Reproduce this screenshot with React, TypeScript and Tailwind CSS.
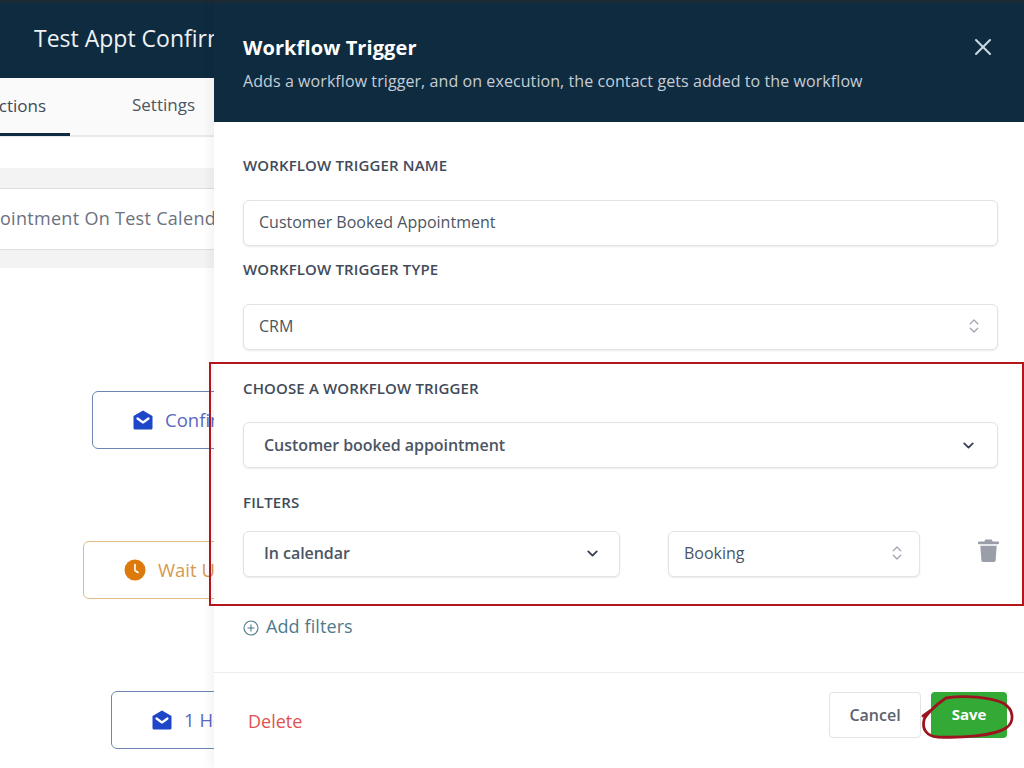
import React from "react";
import { ChevronDown, ChevronsUpDown, X } from "lucide-react";

const font = "font-['Open_Sans',sans-serif]";

function MailIcon({ className }: { className?: string }) {
  return (
    <svg viewBox="0 0 20 20" className={className} fill="currentColor">
      <path d="M10 0.5 L19.5 6 V18 a1.5 1.5 0 0 1 -1.5 1.5 H2 a1.5 1.5 0 0 1 -1.5 -1.5 V6 Z" />
      <path d="M4.5 8.5 L10 12.5 L15.5 8.5" fill="none" stroke="#fff" strokeWidth="2.2" strokeLinecap="round" strokeLinejoin="round" />
    </svg>
  );
}

function Node({ color, text, icon, left, top, label }: { color: string; text: string; icon: React.ReactNode; left: string; top: string; label: string }) {
  return (
    <div className={`${left} ${top} ${color} flex h-[58px] w-[260px] shrink-0 items-center gap-[12px] rounded-[6px] border-[1.5px] pl-[40px] text-[18.5px] ${text}`}>
      {icon}
      <span className="whitespace-nowrap">{label}</span>
    </div>
  );
}

function Label({ children, className = "" }: { children: React.ReactNode; className?: string }) {
  return <div className={`text-[15px] leading-[20px] font-semibold tracking-[0.14px] text-[#414b5a] ${className}`}>{children}</div>;
}

function Box({ children, className = "" }: { children: React.ReactNode; className?: string }) {
  return (
    <div className={`flex h-[46px] items-center justify-between rounded-[6px] border border-[#e1e3e7] bg-white shadow-[0_1px_2px_rgba(0,0,0,0.08)] ${className}`}>
      {children}
    </div>
  );
}

export default function App() {
  return (
    <div className={`${font} relative flex h-[768px] w-[1024px] overflow-hidden bg-white`}>
      {/* background page */}
      <div className="flex w-[214px] shrink-0 flex-col overflow-hidden">
        <div className="flex h-[78px] shrink-0 items-center border-t-[3px] border-[#1c2b33] bg-[#0f2b40] pb-[4px] pl-[34px]">
          <span className="text-[23px] whitespace-nowrap text-[#eef2f5]">Test Appt Confirm</span>
        </div>
        <div className="flex h-[59px] shrink-0 border-b-2 border-[#e9eaec] bg-[#fafafa]">
          <div className="ml-[-60px] flex h-[58px] w-[130px] shrink-0 items-center justify-end border-b-[3px] border-[#0f2b40] pr-[24px] text-[17px] font-medium text-[#3f4a58]">
            Actions
          </div>
          <div className="ml-[62px] flex h-[54px] items-center text-[17px] font-medium text-[#4b5563]">Settings</div>
        </div>
        <div className="mt-[31px] h-[20px] shrink-0 bg-[#f3f3f3]" />
        <div className="flex h-[62px] shrink-0 items-center justify-end overflow-hidden border-y border-[#dedede] bg-white pb-[2px] whitespace-nowrap">
          <span className="mr-[-20px] text-[18px] tracking-[0.3px] text-[#6b7280]">Appointment On Test Calendar</span>
        </div>
        <div className="h-[18px] shrink-0 bg-[#f3f3f3]" />
        <Node left="ml-[92px]" top="mt-[123px]" color="border-[#6f86b5]" text="text-[#5a68c0]" label="Confirmation" icon={<MailIcon className="h-[20px] w-[20px] shrink-0 text-[#1d46c8]" />} />
        <Node left="ml-[83px]" top="mt-[92px]" color="border-[#e3bd85]" text="text-[#d59a4e]" label="Wait Until" icon={
          <svg viewBox="0 0 22 22" className="h-[22px] w-[22px] shrink-0">
            <circle cx="11" cy="11" r="10.5" fill="#dd7a0c" />
            <path d="M11 5.5 V11.5 L14 13.5" fill="none" stroke="#fff" strokeWidth="1.6" strokeLinecap="round" />
          </svg>
        } />
        <Node left="ml-[111px]" top="mt-[92px]" color="border-[#6f86b5]" text="text-[#5a68c0]" label="1 Hour" icon={<MailIcon className="h-[20px] w-[20px] shrink-0 text-[#1d46c8]" />} />
      </div>

      {/* drawer */}
      <div className="flex w-[810px] shrink-0 flex-col bg-white shadow-[-4px_0_10px_rgba(0,0,0,0.05)]">
        <div className="flex h-[122px] shrink-0 items-start justify-between border-t-[3px] border-[#1c2b33] bg-[#0f2b40] pr-[27px] pl-[29px]">
          <div>
            <div className="mt-[31px] text-[20px] leading-[28px] font-bold tracking-[0.1px] text-white">Workflow Trigger</div>
            <div className="mt-[8px] text-[16px] leading-[22px] tracking-[0.08px] text-[#c5ced6]">Adds a workflow trigger, and on execution, the contact gets added to the workflow</div>
          </div>
          <X className="mt-[30px] h-[28px] w-[28px] text-[#c8d6e0]" strokeWidth={1.8} />
        </div>

        <div className="flex h-[551px] shrink-0 flex-col border-b border-[#ececec] pl-[29px]">
          <Label className="mt-[33px]">WORKFLOW TRIGGER NAME</Label>
          <Box className="mt-[25px] w-[755px] pb-[2px] pl-[15px]">
            <span className="text-[16px] text-[#4b5563]">Customer Booked Appointment</span>
          </Box>
          <Label className="mt-[13px]">WORKFLOW TRIGGER TYPE</Label>
          <Box className="mt-[25px] w-[755px] pr-[14px] pb-[2px] pl-[15px]">
            <span className="text-[16px] text-[#4b5563]">CRM</span>
            <ChevronsUpDown className="h-[18px] w-[18px] text-[#9ca3af]" strokeWidth={1.6} />
          </Box>
          <Label className="mt-[28px]">CHOOSE A WORKFLOW TRIGGER</Label>
          <Box className="mt-[24px] w-[755px] pr-[20px] pl-[20px]">
            <span className="text-[16px] font-semibold tracking-[-0.06px] text-[#4b5563]">Customer booked appointment</span>
            <ChevronDown className="h-[17px] w-[17px] text-[#374151]" strokeWidth={2.6} />
          </Box>
          <Label className="mt-[24px]">FILTERS</Label>
          <div className="mt-[19px] flex items-start">
            <Box className="w-[377px] pr-[18px] pb-[2px] pl-[20px]">
              <span className="text-[16px] font-semibold tracking-[-0.06px] text-[#4b5563]">In calendar</span>
              <ChevronDown className="h-[17px] w-[17px] text-[#374151]" strokeWidth={2.6} />
            </Box>
            <Box className="ml-[48px] w-[252px] pr-[13px] pb-[2px] pl-[15px]">
              <span className="text-[16px] text-[#4b5563]">Booking</span>
              <ChevronsUpDown className="h-[18px] w-[18px] text-[#9ca3af]" strokeWidth={1.6} />
            </Box>
            <svg viewBox="0 0 20 22" className="mt-[8px] ml-[58px] h-[23px] w-[21px] text-[#9a9ea8]" fill="currentColor">
              <path d="M7 0.5 h6 l1 2 h5 a1 1 0 0 1 0 2.5 H1 a1 1 0 0 1 0 -2.5 h5 Z" />
              <path d="M2.2 6.5 h15.6 l-1 14 a1.5 1.5 0 0 1 -1.5 1.4 H4.7 a1.5 1.5 0 0 1 -1.5 -1.4 Z" />
            </svg>
          </div>
          <div className="mt-[37px] flex items-center gap-[7px] text-[#4f7a8c]">
            <svg viewBox="0 0 16 16" className="mt-[3px] h-[16px] w-[16px]" fill="none" stroke="currentColor" strokeWidth="1.1">
              <circle cx="8" cy="8" r="7" />
              <path d="M8 4.5 V11.5 M4.5 8 H11.5" />
            </svg>
            <span className="text-[18px] leading-[24px] tracking-[0.1px]">Add filters</span>
          </div>
        </div>

        <div className="flex flex-1 items-start justify-between pr-[17px] pl-[34px]">
          <span className="mt-[36px] text-[18px] leading-[24px] text-[#e0524f]">Delete</span>
          <div className="mt-[19px] flex gap-[10px]">
            <div className="flex h-[46px] w-[92px] items-center justify-center rounded-[4px] border border-[#e1e3e7] bg-white text-[16px] font-semibold text-[#5b6270]">Cancel</div>
            <div className="flex h-[46px] w-[76px] items-center justify-center rounded-[4px] bg-[#33a936] pb-[2px] text-[15px] font-bold text-white">Save</div>
          </div>
        </div>
      </div>

      {/* annotations */}
      <div className="pointer-events-none absolute top-[362px] left-[209px] h-[244px] w-[815px] border-2 border-[#b3151b]" />
      <svg viewBox="0 0 1024 768" className="pointer-events-none absolute inset-0 h-[768px] w-[1024px]" fill="none">
        <path d="M946 698 C965 695 990 697 1003 703 C1014 709 1015 722 1006 728 C994 736 960 738 938 737 C926 736 922 729 924 720 C925 716 934 706 946 698" stroke="#9c1420" strokeWidth="2.8" strokeLinecap="round" strokeLinejoin="round" />
        <path d="M923 716 L930 711" stroke="#9c1420" strokeWidth="2.8" strokeLinecap="round" />
      </svg>
    </div>
  );
}
